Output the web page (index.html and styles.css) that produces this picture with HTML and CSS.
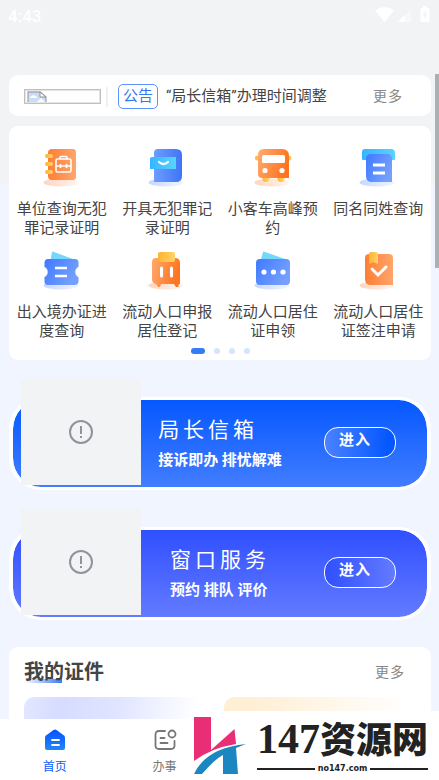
FILE: index.html
```html
<!DOCTYPE html>
<html lang="zh-CN">
<head>
    <meta charset="UTF-8">
    <meta name="viewport" content="width=device-width, initial-scale=1.0">
    <title>首页</title>
    <link rel="stylesheet" href="styles.css">
</head>
<body>
<div class="app">

    <header class="status-bar">
        <span class="clock">4:43</span>
        <svg class="status-icons" width="56" height="18" viewBox="0 0 56 18" fill="#fff">
            <path d="M0 4.500Q9.500-2.500 19 4.500L9.500 16Z"/>
            <path d="M36 3V16H23Z" opacity=".45"/>
            <path d="M30 9V16H23Z"/>
            <path d="M48 2V0h4v2h1.500q1 0 1 1v12q0 1-1 1h-7q-1 0-1-1V3q0-1 1-1z"/>
            <path d="M50.500 4.500L47.500 9.500h2v4l3-5h-2z" fill="#f2f3f5"/>
        </svg>
    </header>

    <main class="content">
        <!-- Notice -->
        <section class="card notice">
            <span class="missing-image">
                <svg width="20" height="11" viewBox="0 0 20 11">
                    <path d="M1 11V1h12l6 5v5" fill="#c9dcfb" stroke="#a9a9a9" stroke-width="1.300"/>
                    <path d="M13 1v5h6z" fill="#fff" stroke="#8f8f8f"/>
                    <path d="M3 7q0-2 2-2 1-2 3 0 2 0 2 2z" fill="#fff"/>
                    <path d="M10 11l4-4 4 4z" fill="#fff"/>
                </svg>
            </span>
            <span class="divider"></span>
            <span class="notice-tag">公告</span>
            <a class="notice-title" href="#">“局长信箱”办理时间调整</a>
            <a class="more" href="#">更多</a>
        </section>

        <!-- Services -->
        <section class="card services">
            <svg class="defs" width="0" height="0">
                <defs>
                    <linearGradient id="orange" x1="0" x2="1" y1="0" y2="0"><stop offset="0" stop-color="#ff7d35"/><stop offset="1" stop-color="#ffa66b"/></linearGradient>
                    <linearGradient id="orangeDark" x1="0" x2="1" y1="0" y2=".3"><stop offset="0" stop-color="#ffab70"/><stop offset="1" stop-color="#ff7420"/></linearGradient>
                    <linearGradient id="blue" x1="0" x2="1" y1="0" y2=".5"><stop offset="0" stop-color="#3f79ff"/><stop offset="1" stop-color="#75a0ff"/></linearGradient>
                    <linearGradient id="blueDark" x1="0" x2="1" y1="0" y2="0"><stop offset="0" stop-color="#6d9dff"/><stop offset="1" stop-color="#3e75f5"/></linearGradient>
                    <linearGradient id="cyan" x1="0" x2="1" y1="0" y2="0"><stop offset="0" stop-color="#36b5ff"/><stop offset="1" stop-color="#58d4ff"/></linearGradient>
                    <linearGradient id="yellow" x1="0" x2="1" y1="0" y2="0"><stop offset="0" stop-color="#ffb42d"/><stop offset="1" stop-color="#ffd36a"/></linearGradient>
                    <linearGradient id="shadeOrange" x1="0" x2="1" y1="0" y2="0"><stop offset="0" stop-color="#ffd5bd"/><stop offset="1" stop-color="#fff5ef"/></linearGradient>
                    <linearGradient id="shadeBlue" x1="0" x2="1" y1="0" y2="0"><stop offset="0" stop-color="#c6d7ff"/><stop offset="1" stop-color="#f2f6ff"/></linearGradient>
                </defs>
            </svg>
            <div class="service-grid">
                <a class="service" href="#">
                    <svg width="48" height="48" viewBox="0 0 48 48">
                        <ellipse cx="23" cy="38.500" rx="17.500" ry="4" fill="url(#shadeOrange)"/>
                        <path d="M14 5h21q3 0 3 3v25q0 3-3 3H14q-4 0-4-4V9q0-4 4-4z" fill="url(#orange)"/>
                        <g fill="url(#yellow)"><rect x="7" y="10" width="8" height="4" rx="2"/><rect x="7" y="18" width="8" height="4" rx="2"/><rect x="7" y="26" width="8" height="4" rx="2"/></g>
                        <g fill="none" stroke="#fff" stroke-width="1.600"><rect x="18" y="15" width="15" height="13" rx="1.500"/><path d="M22 15v-1.500q0-1 1-1h5q1 0 1 1V15M18 22h15M22.500 20v4M28.500 20v4"/></g>
                    </svg>
                    <span class="label">单位查询无犯罪记录证明</span>
                </a>
                <a class="service" href="#">
                    <svg width="48" height="48" viewBox="0 0 48 48">
                        <ellipse cx="23" cy="38.500" rx="17.500" ry="4" fill="url(#shadeBlue)"/>
                        <path d="M15 5h18q6 0 6 6v21q0 6-6 6H11V9q0-4 4-4z" fill="url(#blueDark)"/>
                        <path d="M9 13h24v12H7V15q0-2 2-2z" fill="url(#cyan)"/>
                        <path d="M16 18q4.500 4 9 0" fill="none" stroke="#fff" stroke-width="2.200" stroke-linecap="round"/>
                    </svg>
                    <span class="label">开具无犯罪记录证明</span>
                </a>
                <a class="service" href="#">
                    <svg width="48" height="48" viewBox="0 0 48 48">
                        <ellipse cx="23" cy="38.500" rx="17.500" ry="4" fill="url(#shadeOrange)"/>
                        <g fill="url(#yellow)"><circle cx="8.500" cy="14" r="2.500"/><circle cx="40" cy="14" r="2.500"/><circle cx="17" cy="34.500" r="3.500"/><circle cx="32" cy="34.500" r="3.500"/></g>
                        <path d="M15 5h18q7 0 7 7v22H13q-4 0-4-4V11q0-6 6-6z" fill="url(#orangeDark)"/>
                        <rect x="13" y="11" width="23" height="8" rx="1.500" fill="#fff"/>
                        <g fill="#fff"><circle cx="16" cy="26.500" r="2.600"/><circle cx="33" cy="26.500" r="2.600"/></g>
                    </svg>
                    <span class="label">小客车高峰预约</span>
                </a>
                <a class="service" href="#">
                    <svg width="48" height="48" viewBox="0 0 48 48">
                        <ellipse cx="23" cy="38.500" rx="17.500" ry="4" fill="url(#shadeBlue)"/>
                        <path d="M11 5h26q4 0 4 4v6q0 1-1 1H9q-1 0-1-1V8q0-3 3-3z" fill="url(#cyan)"/>
                        <path d="M17 10h16q5 0 5 5v23H18q-6 0-6-6V15q0-5 5-5z" fill="url(#blue)"/>
                        <path d="M19 21h12M19 29h12" stroke="#fff" stroke-width="2.800"/>
                    </svg>
                    <span class="label">同名同姓查询</span>
                </a>
                <a class="service" href="#">
                    <svg width="48" height="48" viewBox="0 0 48 48">
                        <ellipse cx="23" cy="38.500" rx="17.500" ry="4" fill="url(#shadeBlue)"/>
                        <path d="M14 5q1-1 2 0l24 9-28 2z" fill="#74d7fb"/>
                        <path d="M10 12h27q3.500 0 3.500 3.500V20a5.500 5.500 0 0 0 0 10v4q0 4-4 4H10q-3.500 0-3.500-3.500V30a5.500 5.500 0 0 0 0-10v-4q0-4 3.500-4z" fill="url(#blue)"/>
                        <path d="M17 21h12M17 29h12" stroke="#fff" stroke-width="2.600"/>
                    </svg>
                    <span class="label">出入境办证进度查询</span>
                </a>
                <a class="service" href="#">
                    <svg width="48" height="48" viewBox="0 0 48 48">
                        <ellipse cx="23" cy="38.500" rx="17.500" ry="4" fill="url(#shadeOrange)"/>
                        <path d="M13 11h19q5 0 5 5v21h-1l-1 3h-2l-2-3H18l-1 3h-2l-2-3q-4-1-4-4.500V15q0-4 4-4z" fill="url(#orangeDark)"/>
                        <rect x="15" y="5" width="17" height="10" rx="2" fill="url(#yellow)"/>
                        <path d="M18.500 21v8M28.500 21v8" stroke="#fff" stroke-width="3" stroke-linecap="round"/>
                    </svg>
                    <span class="label">流动人口申报居住登记</span>
                </a>
                <a class="service" href="#">
                    <svg width="48" height="48" viewBox="0 0 48 48">
                        <ellipse cx="23" cy="38.500" rx="17.500" ry="4" fill="url(#shadeBlue)"/>
                        <path d="M14 5q1-1 2 0l23 8-28 3z" fill="#74d7fb"/>
                        <rect x="7" y="12" width="34" height="26" rx="4" fill="url(#blue)"/>
                        <g fill="#fff"><circle cx="15" cy="25" r="2.600"/><circle cx="24.500" cy="25" r="2.600"/><circle cx="34" cy="25" r="2.600"/></g>
                    </svg>
                    <span class="label">流动人口居住证申领</span>
                </a>
                <a class="service" href="#">
                    <svg width="48" height="48" viewBox="0 0 48 48">
                        <ellipse cx="23" cy="38.500" rx="17.500" ry="4" fill="url(#shadeOrange)"/>
                        <path d="M15 7h20q4 0 4 4v27H17q-6 0-6-6V11q0-4 4-4z" fill="url(#orange)"/>
                        <path d="M17 5h5q2 0 2 2v10l-4.500-2-4.500 2V7q0-2 2-2z" fill="url(#yellow)"/>
                        <path d="M18 22l6 6 8-8" fill="none" stroke="#fff" stroke-width="3" stroke-linecap="round"/>
                    </svg>
                    <span class="label">流动人口居住证签注申请</span>
                </a>
            </div>
            <div class="dots">
                <span class="dot active"></span>
                <span class="dot"></span>
                <span class="dot"></span>
                <span class="dot"></span>
            </div>
        </section>

        <!-- Banners -->
        <section class="banner mailbox">
            <div class="placeholder">
                <svg width="24" height="24" viewBox="0 0 24 24" fill="none" stroke="#909399" stroke-width="2">
                    <circle cx="12" cy="12" r="11"/>
                    <path d="M12 6v8M12 16v2"/>
                </svg>
            </div>
            <div class="banner-text">
                <div>
                    <h2>局长信箱</h2>
                    <p>接诉即办 排忧解难</p>
                </div>
            </div>
            <button class="enter" type="button">进入</button>
        </section>

        <section class="banner window">
            <div class="placeholder">
                <svg width="24" height="24" viewBox="0 0 24 24" fill="none" stroke="#909399" stroke-width="2">
                    <circle cx="12" cy="12" r="11"/>
                    <path d="M12 6v8M12 16v2"/>
                </svg>
            </div>
            <div class="banner-text">
                <div>
                    <h2>窗口服务</h2>
                    <p>预约 排队 评价</p>
                </div>
            </div>
            <button class="enter" type="button">进入</button>
        </section>

        <!-- Certificates -->
        <section class="card certificates">
            <div class="section-head">
                <h3>我的证件</h3>
                <a class="more" href="#">更多</a>
            </div>
            <div class="certificate-grid">
                <div class="certificate violet"></div>
                <div class="certificate amber"></div>
            </div>
        </section>
    </main>

    <nav class="tab-bar">
        <a class="tab active" href="#">
            <svg width="24" height="24" viewBox="0 0 24 24">
                <defs><linearGradient id="home" x1="0" x2="0" y1="0" y2="1"><stop offset="0" stop-color="#0550ff"/><stop offset="1" stop-color="#2487f5"/></linearGradient></defs>
                <path d="M10.500 2q1.500-1 3 0l7.500 5.500q1 1 1 2V20q0 2-2 2H4q-2 0-2-2V9.500q0-1 1-2z" fill="url(#home)"/>
                <path d="M9 12h7M9 17h7" stroke="#fff" stroke-width="1.800" stroke-linecap="round"/>
            </svg>
            首页
        </a>
        <a class="tab" href="#">
            <svg width="24" height="24" viewBox="0 0 24 24" fill="none" stroke="#777" stroke-width="1.800" stroke-linecap="round">
                <path d="M12 3H6Q2.500 3 2.500 6.500v11Q2.500 21 6 21h12q3.500 0 3.500-3.500V13M7.500 10h4M7.500 15h7"/>
                <circle cx="19" cy="6" r="3.500"/>
            </svg>
            办事
        </a>
    </nav>

    <div class="scrollbar"></div>

    <div class="site-mark">
        <svg width="52" height="57" viewBox="0 0 52 57">
            <path d="M0 0h17v33L40.500 12l1.500 15Q17 31 0 44z" fill="#e92e76"/>
            <path d="M0 57Q12 31 52 27L42 31l2 26H29V38Q21 42 8 57z" fill="#1b86c0"/>
        </svg>
        <div class="site-name">
            <strong><span class="digits">147</span>资源网</strong>
            <small>no147.com</small>
        </div>
    </div>

</div>
</body>
</html>
```
FILE: styles.css
```css
* {
    box-sizing: border-box;
}

body {
    margin: 0;
    font-family: Roboto, "Noto Sans CJK SC", sans-serif;
    color: #444;
}

h2, h3, p {
    margin: 0;
}

a {
    color: inherit;
    text-decoration: none;
}

svg {
    display: block;
    flex-shrink: 0;
}

.app {
    position: relative;
    display: flex;
    flex-direction: column;
    height: 100vh;
    overflow: hidden;
    background: linear-gradient(#f2f3f5 184px, #f0f5ff 184px);
}

/* Status bar */
.status-bar {
    display: flex;
    justify-content: space-between;
    align-items: flex-start;
    padding: 6px 8px 0;
    flex: 0 0 75px;
    color: #fff;
}

.clock {
    font-size: 17px;
    line-height: 20px;
    font-weight: 500;
}

.content {
    flex: 1;
    min-height: 0;
    overflow: hidden;
    padding: 0 8px 0 9px;
}

.card {
    background: #fff;
    border-radius: 9px;
}

.more {
    font-size: 14px;
    letter-spacing: 1px;
    color: #888;
}

/* Notice */
.notice {
    display: flex;
    align-items: center;
    padding: 9px 28px 7px 15px;
    line-height: 23px;
}

.missing-image {
    width: 77px;
    height: 15px;
    padding: 1px 2px;
    border: 1px solid #c0c0c0;
    outline: 1px solid #e4e4e4;
    outline-offset: -2px;
}

.divider {
    width: 2px;
    height: 20px;
    margin: 0 10px 0 5px;
    background: #f0f0f0;
}

.notice-tag {
    padding: 0 4px;
    border: 1px solid #5c93ff;
    border-radius: 5px;
    font-size: 15px;
    color: #3478f6;
}

.notice-title {
    flex: 1;
    margin-left: 8px;
    font-size: 15px;
    white-space: nowrap;
}

/* Services */
.services {
    margin-top: 10px;
    padding: 18px 0 6px;
}

.defs {
    position: absolute;
}

.service-grid {
    display: grid;
    grid-template-columns: repeat(4, 1fr);
    row-gap: 9px;
}

.service {
    display: flex;
    flex-direction: column;
    align-items: center;
    gap: 8px;
    padding: 0 7px;
    font-size: 15px;
    line-height: 19px;
    text-align: center;
}

.dots {
    display: flex;
    justify-content: center;
    gap: 9px;
    margin-top: 7px;
}

.dot {
    width: 6px;
    height: 6px;
    border-radius: 3px;
    background: #d3e6ff;
}

.dot.active {
    width: 14px;
    background: #347cf5;
}

/* Banners */
.banner {
    display: flex;
    align-items: center;
    margin-top: 37px;
    padding: 0 31px 2px 8px;
    border: solid #fff;
    border-width: 3px 4px;
    border-radius: 32px;
    color: #fff;
}

.mailbox {
    background: linear-gradient(#0558ff, #427dff) padding-box;
}

.window {
    background: linear-gradient(#304fff, #637bff) padding-box;
}

.placeholder {
    display: flex;
    align-items: center;
    justify-content: center;
    width: 120px;
    height: 106px;
    margin-top: -21px;
    background: #f2f3f5;
}

.banner-text {
    display: flex;
    flex: 1;
    justify-content: center;
    padding-top: 4px;
}

.banner-text h2 {
    font-size: 21px;
    line-height: 30px;
    font-weight: 400;
    letter-spacing: 4px;
}

.banner-text p {
    font-size: 15px;
    line-height: 30px;
    font-weight: 700;
}

.enter {
    width: 72px;
    height: 31px;
    margin-left: 25px;
    padding: 0 0 5px 14px;
    border: 1px solid #fff;
    border-radius: 14px;
    font: 700 15px/24px Roboto, "Noto Sans CJK SC", sans-serif;
    letter-spacing: 1px;
    text-align: left;
    color: #fff;
}

.mailbox .enter {
    background: linear-gradient(90deg, #4b82ff, #0558ff 90%);
}

.window .enter {
    background: linear-gradient(90deg, #304fff, #637bff);
}

/* Certificates */
.certificates {
    margin-top: 27px;
    padding: 10px 18px 20px 15px;
}

.section-head {
    display: flex;
    justify-content: space-between;
    align-items: center;
    padding-right: 8px;
    line-height: 30px;
}

.section-head h3 {
    font-size: 20px;
    font-weight: 700;
    background: linear-gradient(90deg, #fff, #347cf5) 0 22px / 38px 4px no-repeat;
}

.certificate-grid {
    display: grid;
    grid-template-columns: 1fr 1fr;
    gap: 10px;
    margin-top: 10px;
}

.certificate {
    height: 90px;
    border-radius: 10px;
}

.violet {
    background: linear-gradient(100deg, #e3e7ff, #d6dcff 18%, #dfe4ff 45%, #fff 85%);
}

.amber {
    background: linear-gradient(100deg, #ffefd5 15%, #fff 90%);
}

/* Tab bar */
.tab-bar {
    display: grid;
    grid-template-columns: repeat(4, 1fr);
    padding: 9px 0 4px;
    background: #fff;
}

.tab {
    display: flex;
    flex-direction: column;
    align-items: center;
    gap: 6px;
    font-size: 12px;
    line-height: 18px;
    color: #777;
}

.tab.active {
    color: #0b5cff;
}

.scrollbar {
    position: absolute;
    top: 74px;
    right: 0;
    width: 4px;
    height: 194px;
    background: #adb0b3;
}

/* Site mark over the bottom corner */
.site-mark {
    position: absolute;
    right: 0;
    bottom: 0;
    display: flex;
    gap: 11px;
    padding: 6px 11px 5px 0;
    background: #fff;
    color: #222;
}

.site-name strong {
    display: block;
    font-size: 36px;
    line-height: 44px;
    font-weight: 900;
    white-space: nowrap;
}

.digits {
    font-family: "Liberation Serif", serif;
    font-size: 42px;
    font-weight: 700;
}

.site-name small {
    display: flex;
    align-items: center;
    gap: 3px;
    font: 700 8px/12px "DejaVu Sans", sans-serif;
}

.site-name small::before,
.site-name small::after {
    content: "";
    flex: 1;
    height: 2px;
    background: #222;
}
```
